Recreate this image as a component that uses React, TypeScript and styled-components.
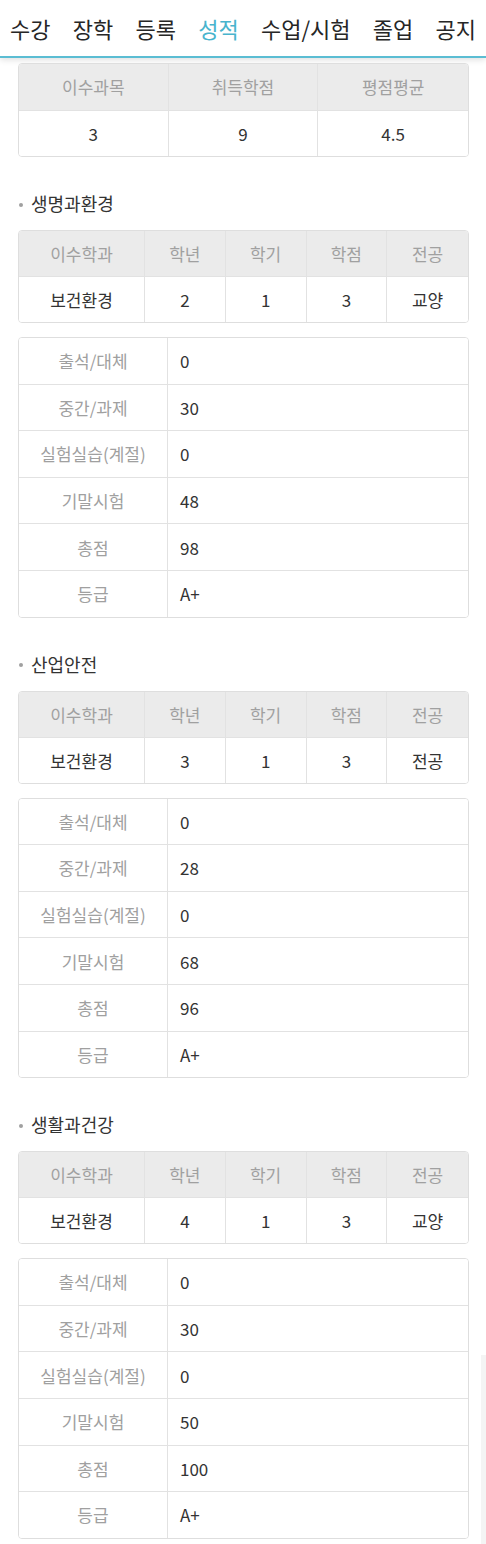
import React from 'react';
import styled, { createGlobalStyle } from 'styled-components';

const GlobalStyle = createGlobalStyle`
  html, body {
    margin: 0;
    padding: 0;
    background: #fff;
  }
  body {
    font-family: "Noto Sans CJK KR", "Noto Sans", sans-serif;
    color: #333;
  }
`;

const Page = styled.div`
  position: relative;
  width: 486px;
  min-height: 1544px;
  overflow: hidden;
`;

const TabBar = styled.nav`
  display: flex;
  justify-content: space-between;
  align-items: center;
  height: 56px;
  padding: 0 10px 0 10px;
  border-bottom: 2px solid #5bbdd3;
  box-shadow: 0 2px 6px rgba(0, 0, 0, 0.12);
`;

const Tab = styled.span<{ $active?: boolean }>`
  font-size: 22px;
  line-height: 1;
  color: ${(p) => (p.$active ? '#48b4cd' : '#262626')};
  white-space: nowrap;
`;

const Content = styled.div`
  padding: 5px 17px 0 18px;
`;

const Table = styled.div<{ $cols: string }>`
  display: grid;
  grid-template-columns: ${(p) => p.$cols};
  border: 1px solid #dedede;
  border-radius: 4px;
  overflow: hidden;
`;

const Cell = styled.div<{ $h: number; $head?: boolean; $label?: boolean; $left?: boolean; $last?: boolean; $bottom?: boolean }>`
  height: ${(p) => p.$h}px;
  display: flex;
  align-items: center;
  justify-content: ${(p) => (p.$left ? 'flex-start' : 'center')};
  padding-left: ${(p) => (p.$left ? '12px' : '0')};
  font-size: 17px;
  color: ${(p) => (p.$head || p.$label ? '#a0a0a0' : '#333')};
  background: ${(p) => (p.$head ? '#ebebeb' : '#fff')};
  border-right: ${(p) => (p.$last ? 'none' : '1px solid #e2e2e2')};
  border-bottom: ${(p) => (p.$bottom ? 'none' : '1px solid #e2e2e2')};
  white-space: nowrap;
`;

const SectionTitle = styled.h3`
  display: flex;
  align-items: center;
  margin: 33px 0 14px;
  height: 26px;
  font-size: 18px;
  font-weight: 400;
  color: #333;

  &::before {
    content: '';
    width: 4px;
    height: 4px;
    border-radius: 50%;
    background: #a0a0a0;
    margin: 3px 8px 0 1px;
  }
`;

const Gap = styled.div`
  height: 14px;
`;

const ScrollThumb = styled.div`
  position: absolute;
  right: 0;
  top: 1355px;
  width: 5px;
  bottom: 0;
  background: #f4f4f4;
`;

const tabs = ['수강', '장학', '등록', '성적', '수업/시험', '졸업', '공지'];

const subjects = [
  { name: '생명과환경', dept: '보건환경', year: '2', term: '1', credit: '3', kind: '교양', scores: ['0', '30', '0', '48', '98', 'A+'] },
  { name: '산업안전', dept: '보건환경', year: '3', term: '1', credit: '3', kind: '전공', scores: ['0', '28', '0', '68', '96', 'A+'] },
  { name: '생활과건강', dept: '보건환경', year: '4', term: '1', credit: '3', kind: '교양', scores: ['0', '30', '0', '50', '100', 'A+'] },
];

const scoreLabels = ['출석/대체', '중간/과제', '실험실습(계절)', '기말시험', '총점', '등급'];
const infoHeads = ['이수학과', '학년', '학기', '학점', '전공'];

const App = () => {
  return (
    <Page>
      <GlobalStyle />
      <TabBar>
        {tabs.map((t) => (
          <Tab key={t} $active={t === '성적'}>
            {t}
          </Tab>
        ))}
      </TabBar>
      <Content>
        <Table $cols="repeat(3, 1fr)">
          {['이수과목', '취득학점', '평점평균'].map((h, i) => (
            <Cell key={h} $h={45.5} $head $last={i === 2}>
              {h}
            </Cell>
          ))}
          {['3', '9', '4.5'].map((v, i) => (
            <Cell key={i} $h={45.5} $bottom $last={i === 2}>
              {v}
            </Cell>
          ))}
        </Table>

        {subjects.map((s) => (
          <div key={s.name}>
            <SectionTitle>{s.name}</SectionTitle>
            <Table $cols="126px repeat(4, 1fr)">
              {infoHeads.map((h, i) => (
                <Cell key={h} $h={45} $head $last={i === 4}>
                  {h}
                </Cell>
              ))}
              {[s.dept, s.year, s.term, s.credit, s.kind].map((v, i) => (
                <Cell key={i} $h={45} $bottom $last={i === 4}>
                  {v}
                </Cell>
              ))}
            </Table>
            <Gap />
            <Table $cols="149px 1fr">
              {scoreLabels.map((label, i) => (
                <React.Fragment key={label}>
                  <Cell $h={45.6} $label $bottom={i === 5}>
                    {label}
                  </Cell>
                  <Cell $h={45.6} $left $last $bottom={i === 5}>
                    {s.scores[i]}
                  </Cell>
                </React.Fragment>
              ))}
            </Table>
          </div>
        ))}
      </Content>
      <ScrollThumb />
    </Page>
  );
};

export default App;
